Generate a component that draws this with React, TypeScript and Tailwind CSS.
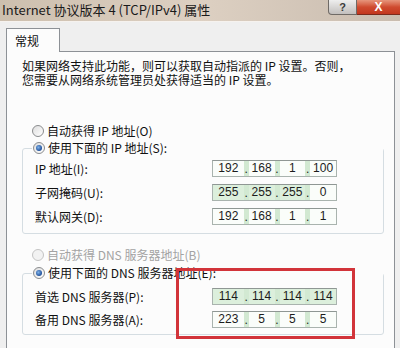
import React from 'react';

const cjk = "font-['Noto_Sans_CJK_SC',sans-serif]";

function Radio({ checked = false, disabled = false }: { checked?: boolean; disabled?: boolean }) {
  return (
    <span
      className={`flex w-[12px] h-[12px] shrink-0 items-center justify-center rounded-full border ${
        disabled ? 'border-[#c4c4c4] bg-[#f2f2f2]' : 'border-[#8a8c8e] bg-gradient-to-br from-[#dedede] to-[#ffffff]'
      }`}
    >
      {checked && (
        <span className="w-[6px] h-[6px] rounded-full bg-[radial-gradient(circle_at_40%_40%,#7fb2e8,#1f4f9a_70%)]" />
      )}
    </span>
  );
}

function RadioRow({ label, checked, disabled, caption }: { label: string; checked?: boolean; disabled?: boolean; caption?: boolean }) {
  return (
    <div className={`flex h-[14px] items-center gap-[3px] ${caption ? 'self-start bg-[#fcfcfc] pl-[1px] pr-[2px]' : ''}`}>
      <Radio checked={checked} disabled={disabled} />
      <span className={`text-[12px] leading-[14px] ${disabled ? 'text-[#a3a3a3]' : 'text-[#111]'}`}>{label}</span>
    </div>
  );
}

function IpField({ parts, tint }: { parts: string[]; tint: boolean[] }) {
  return (
    <div className="flex w-[125px] h-[17px] border border-[#a9b3ae] border-t-[#8f9794] bg-[#fafdfa] font-['Liberation_Sans',sans-serif] text-[12px] text-[#1c1c1c]">
      {parts.map((p, i) => (
        <div key={i} className={`flex flex-1 items-center ${tint[i] ? 'bg-[#dcefdc]' : ''}`}>
          {i > 0 && <span className="flex h-full w-[5px] items-end justify-center bg-[#d2e9d2] pb-[1px] leading-[12px]">.</span>}
          <span className="flex-1 text-center leading-[15px]">{p}</span>
        </div>
      ))}
    </div>
  );
}

function FieldRow({ label, parts, tint }: { label: string; parts: string[]; tint: boolean[] }) {
  return (
    <div className="flex h-[17px] items-center">
      <span className="w-[177px] text-[12px] leading-[14px] text-[#111]">{label}</span>
      <IpField parts={parts} tint={tint} />
    </div>
  );
}

export default function App() {
  return (
    <div className={`relative w-[400px] h-[348px] overflow-hidden bg-[#efefef] ${cjk}`}>
      {/* title bar */}
      <div className="flex h-[21px] items-start bg-gradient-to-r from-[#cdbfae] via-[#ddd0c2] to-[#c9bcaf]">
        <span className="pl-[2px] pt-[2px] text-[13px] leading-[16px] text-[#1a1a1a]">
          Internet 协议版本 4 (TCP/IPv4) 属性
        </span>
        <div className="ml-auto flex h-[15px]">
          <div className="flex w-[29px] items-center justify-center rounded-bl-[4px] border border-t-0 border-[#6f6a66] bg-gradient-to-b from-[#eeeeee] to-[#c2bfbd] font-['Liberation_Sans',sans-serif] text-[11px] font-bold leading-[13px] text-[#3a3a3a]">
            ?
          </div>
          <div className="flex w-[43px] items-center justify-center border-b border-[#7b2a1c] bg-gradient-to-b from-[#e6957c] via-[#cf4b2f] to-[#c2361e] font-['Liberation_Sans',sans-serif] text-[12px] font-bold leading-[13px] text-white">
            X
          </div>
        </div>
      </div>
      <div className="h-[1px] bg-[#f6f2ee]" />
      {/* body */}
      <div className="pl-[6px] pt-[6px]">
        <div className="relative z-10 flex w-[54px] h-[24px] items-start border border-b-0 border-[#8d9196] bg-[#fcfcfc] pl-[8px] pt-[5px] text-[12px] leading-[14px] text-[#111]">
          常规
        </div>
        <div className="-mt-[1px] w-[389px] h-[300px] border border-[#8d9196] bg-[#fcfcfc] pl-[15px] pt-[7px]">
          <p className="text-[12px] leading-[14px] text-[#111]">
            如果网络支持此功能，则可以获取自动指派的 IP 设置。否则，
            <br />
            您需要从网络系统管理员处获得适当的 IP 设置。
          </p>
          <div className="ml-[10px] mt-[37px]">
            <RadioRow label="自动获得 IP 地址(O)" />
          </div>
          {/* group 1 */}
          <div className="mt-[10px] flex w-[362px] flex-col rounded-[3px] border border-[#d5dde2] pb-[8px] pl-[12px]">
            <div className="-mt-[8px] ml-[-3px]">
              <RadioRow label="使用下面的 IP 地址(S):" checked caption />
            </div>
            <div className="mt-[5px] flex flex-col gap-[7px]">
              <FieldRow label="IP 地址(I):" parts={['192', '168', '1', '100']} tint={[false, false, false, false]} />
              <FieldRow label="子网掩码(U):" parts={['255', '255', '255', '0']} tint={[true, true, true, false]} />
              <FieldRow label="默认网关(D):" parts={['192', '168', '1', '1']} tint={[false, false, false, false]} />
            </div>
          </div>
          <div className="ml-[10px] mt-[14px]">
            <RadioRow label="自动获得 DNS 服务器地址(B)" disabled />
          </div>
          {/* group 2 */}
          <div className="mt-[11px] flex w-[362px] flex-col rounded-[3px] border border-[#d5dde2] pb-[6px] pl-[12px]">
            <div className="-mt-[8px] ml-[-3px]">
              <RadioRow label="使用下面的 DNS 服务器地址(E):" checked caption />
            </div>
            <div className="mt-[8px] flex flex-col gap-[6px]">
              <FieldRow label="首选 DNS 服务器(P):" parts={['114', '114', '114', '114']} tint={[true, true, true, true]} />
              <FieldRow label="备用 DNS 服务器(A):" parts={['223', '5', '5', '5']} tint={[false, false, false, false]} />
            </div>
          </div>
        </div>
      </div>
      {/* red highlight box */}
      <div className="absolute left-[176px] top-[268px] w-[179px] h-[71px] border-[3px] border-[#d2343a]" />
    </div>
  );
}
